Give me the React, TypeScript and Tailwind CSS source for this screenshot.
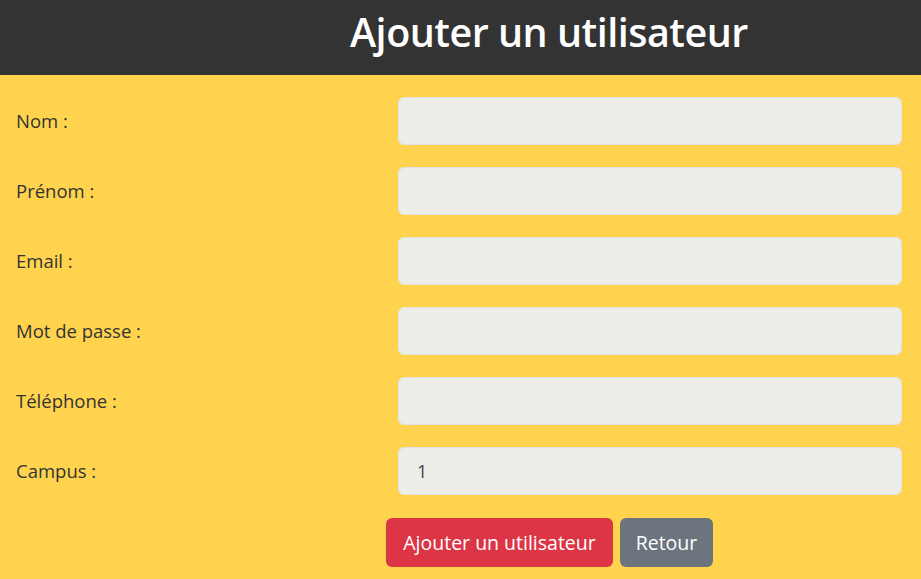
import React from "react";

const fields = [
  { label: "Nom :", value: "" },
  { label: "Prénom :", value: "" },
  { label: "Email :", value: "" },
  { label: "Mot de passe :", value: "" },
  { label: "Téléphone :", value: "" },
  { label: "Campus :", value: "1" },
];

export default function App() {
  return (
    <div
      className="min-h-[579px] bg-[#ffd34e] text-[#333333]"
      style={{ fontFamily: '"Open Sans", "Noto Sans", sans-serif' }}
    >
      {/* Header */}
      <div className="flex h-[75px] items-center bg-[#333333] pb-[10px] pl-[350px]">
        <h1 className="text-[39.5px] font-semibold tracking-[-0.5px] text-white">
          Ajouter un utilisateur
        </h1>
      </div>

      {/* Form */}
      <form className="flex flex-col gap-[22px] pt-[22px] pl-[16px] pr-[19px]">
        {fields.map((f) => (
          <div key={f.label} className="flex items-center">
            <label className="w-[382px] text-[18.5px]">{f.label}</label>
            <input
              readOnly
              value={f.value}
              className="h-[48px] flex-1 rounded-[6px] border border-[#e3e3de] bg-[#eeeee9] px-[18px] text-[18px] text-[#444444] outline-none"
            />
          </div>
        ))}

        <div className="mt-[1px] flex gap-[7px] pl-[370px]">
          <button
            type="button"
            className="h-[49px] w-[227px] rounded-[6px] bg-[#dc3545] text-[19.5px] text-white"
          >
            Ajouter un utilisateur
          </button>
          <button
            type="button"
            className="h-[49px] w-[93px] rounded-[6px] bg-[#6c757d] text-[19.5px] text-white"
          >
            Retour
          </button>
        </div>
      </form>
    </div>
  );
}
